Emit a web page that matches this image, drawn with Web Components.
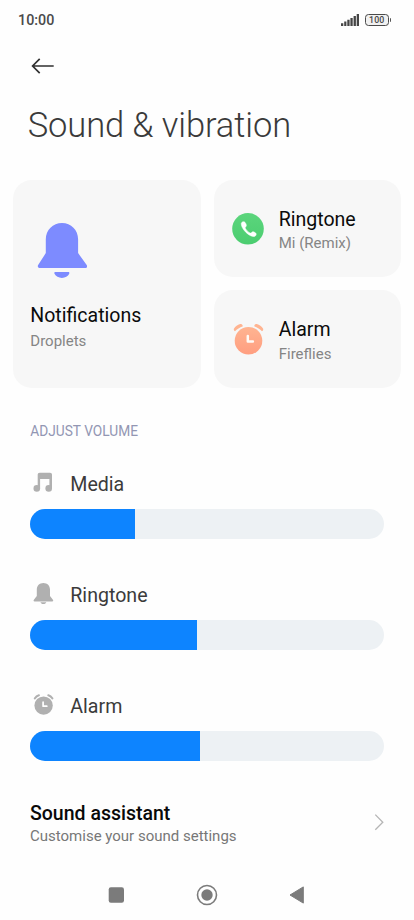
<!DOCTYPE html>
<html lang="en">
<head>
<meta charset="utf-8">
<title>Sound &amp; vibration</title>
<style>
html,body{margin:0;padding:0;background:#fefefe}
body{font-family:Roboto,"Liberation Sans",sans-serif;color:#333;width:414px;height:920px;overflow:hidden}
</style>
</head>
<body>
<sound-screen></sound-screen>
<script>
const define = (name, markup) => {
  customElements.define(name, class extends HTMLElement {
    constructor() {
      super();
      const t = document.createElement('template');
      t.innerHTML = typeof markup === 'function' ? markup(this) : markup;
      this.attachShadow({ mode: 'open' }).append(t.content.cloneNode(true));
    }
  });
};

const icons = {
  back: ['0 0 24 24', '<path d="M22.700 12H1.700M8.700 4.900L1.600 12L8.700 19.100" fill="none" stroke="#303030" stroke-width="1.700"/>'],
  bell: ['37 222 51 57', '<path fill="#7d8bff" d="M62 223c9.100 0 16.100 7.200 16.100 16.200v13.900l8.400 11.700c1.300 1.900.3 3.300-1.500 3.300H40c-1.900 0-2.900-1.400-1.700-3.300l7.500-11.700v-13.900C45.800 230.200 52.900 223 62 223zM55.500 272h12.600c1.200 0 1.500.8 1.100 1.800c-1.200 2.700-4 4.100-7.300 4.100s-6.100-1.400-7.400-4.100c-.4-1-.1-1.800 1-1.800z"/>'],
  phone: ['232 213 32 32', '<defs><linearGradient id="g" x1="0" y1="0" x2="0" y2="1"><stop offset="0" stop-color="#5bd57c"/><stop offset="1" stop-color="#4bcd70"/></linearGradient></defs><circle cx="248" cy="228.800" r="15.800" fill="url(#g)"/><path fill="#fff" stroke="#fff" stroke-width=".5" d="M241.300 223.500c.2-1.300 1.500-1.900 2.700-1.700c.9.1 1.500 1.100 2 2.300c.5 1.300.5 2-.2 2.600c-.8.7-.7 1.300-.1 2.200c1 1.600 2.400 3 4 3.900c.8.4 1.300.3 1.900-.4c.7-.8 1.400-.8 2.600-.3c1.200.6 2 1.300 2 2.100c0 1.200-.9 2.100-2.100 2.300c-1.900.3-5.300-1.400-8.100-4.100c-3-2.900-5-6.600-4.700-8.900z"/>'],
  alarm: ['232 323 33 33', '<defs><linearGradient id="a" x1="0" y1="0" x2="0" y2="1"><stop offset="0" stop-color="#ffb491"/><stop offset="1" stop-color="#ff9e80"/></linearGradient></defs><circle cx="248.500" cy="340.700" r="13.800" fill="url(#a)"/><path fill="#ffb491" d="M235 331.300c-1.200-.9-1.500-1.700-1-2.700c1.400-2.300 3.500-3.800 6.200-4.500c1-.2 1.800 0 2.200.9l.5 1.200c-3.300 1.200-5.900 2.900-7.900 5.100zM262 331.300c1.200-.9 1.500-1.700 1-2.700c-1.400-2.300-3.500-3.800-6.200-4.500c-1-.2-1.800 0-2.200.9l-.5 1.200c3.300 1.200 5.900 2.900 7.900 5.100z"/><path d="M247.800 336v5.600h5.100" fill="none" stroke="#fffaf5" stroke-width="2.500" stroke-linecap="round" stroke-linejoin="round"/>'],
  music: ['33 472 20 20', '<path fill="#b0b0b0" d="M37.700 474.700c0-1.300.7-2 2-2h10.300c1.300 0 2 .7 2 2V488.500H49.400V479H40.100V488.500H37.700z"/><circle cx="36.800" cy="488.400" r="3.300" fill="#b0b0b0"/><circle cx="48.700" cy="488.400" r="3.300" fill="#b0b0b0"/>'],
  bellSmall: ['33 583 21 21', '<path fill="#b0b0b0" d="M43.400 583.100c3.900 0 6.600 2.800 6.600 6.500v6.500l2.900 3.700c.7.900.3 1.700-.7 1.700H34.600c-1 0-1.400-.8-.7-1.700l2.900-3.700v-6.500c0-3.700 2.700-6.500 6.600-6.500zM40.500 602.200h5.800c-.3 1.100-1.400 1.800-2.900 1.800s-2.600-.7-2.900-1.800z"/>'],
  alarmSmall: ['33 694 21 21', '<circle cx="43.600" cy="705.600" r="9.200" fill="#b0b0b0"/><path d="M34.900 698.300q1.500-2.400 4-3.100M52.300 698.300q-1.500-2.400-4-3.100" fill="none" stroke="#b0b0b0" stroke-width="2.100" stroke-linecap="round"/><path d="M43.100 702.200v4h3.700" fill="none" stroke="#fff" stroke-width="1.700" stroke-linecap="round" stroke-linejoin="round"/>'],
  chevron: ['374 813 11 19', '<path d="M375.300 814.600l7.500 7.600l-7.500 7.600" fill="none" stroke="#b5b5b5" stroke-width="1.300"/>'],
  signal: ['340 13 20 14', '<path fill="#454545" d="M341 23.200h2.300V26H341zM344.200 21.500h2.200V26h-2.200zM347.300 19.800h2.300V26h-2.300zM350.400 17.900h2.300V26h-2.300zM353.600 16h2.300v10h-2.300zM356.700 14h2.300v12h-2.300z"/>'],
  square: ['0 0 22 22', '<rect x="3.700" y="3.300" width="15.300" height="15.400" rx="2.200" fill="#7b7b7b"/>'],
  home: ['0 0 22 22', '<circle cx="11" cy="11" r="9.500" fill="none" stroke="#7b7b7b" stroke-width="1.600"/><circle cx="11" cy="11" r="5.700" fill="#7b7b7b"/>'],
  triangle: ['0 0 22 22', '<path d="M4 11L17.300 2.900V19.100Z" fill="#7b7b7b" stroke="#7b7b7b" stroke-width="1" stroke-linejoin="round"/>']
};

define('ui-icon', el => {
  const [box, art] = icons[el.getAttribute('name')];
  const [, , w, h] = box.split(' ');
  return `<style>:host{display:block;flex:none;width:${w}px;height:${h}px}svg{display:block}</style><svg width="${w}" height="${h}" viewBox="${box}">${art}</svg>`;
});

define('battery-level', `<style>
:host{display:flex;align-items:center;gap:.5px}
.cell{box-sizing:border-box;width:24.500px;height:12px;border:1.300px solid #4a4a4a;border-radius:3.500px;display:flex;align-items:center;justify-content:center;font:500 8.800px/10px Roboto,sans-serif;letter-spacing:.1px;color:#484848;background:#f1f1f1}
.nub{width:1.700px;height:4px;background:#555;border-radius:0 1px 1px 0}
</style><div class="cell"><slot></slot></div><div class="nub"></div>`);

define('status-bar', `<style>
:host{display:flex;box-sizing:border-box;height:40px;padding:10px 22.800px 0 18px;justify-content:space-between}
.time{font-size:14.300px;line-height:20px;font-weight:500;color:#4a4a4a}
.right{display:flex;align-items:flex-start;gap:4.300px;padding-top:3px}
battery-level{margin-top:.6px}
</style><span class="time"><slot></slot></span><div class="right"><ui-icon name="signal"></ui-icon><battery-level>100</battery-level></div>`);

define('page-header', `<style>
:host{display:flex;flex-direction:column;height:139.500px}
ui-icon{margin:14px 0 0 30.500px}
h1{margin:25.300px 0 0 27.700px;font-weight:300;font-size:34.500px;letter-spacing:-.1px;line-height:44px;color:#3a3a3a;white-space:nowrap}
</style><ui-icon name="back"></ui-icon><h1><slot></slot></h1>`);

define('sound-card', `<style>
:host{display:flex;box-sizing:border-box;background:#f7f7f7;border-radius:19px;align-items:flex-start;padding:27.500px 0 0 18.500px;gap:14.400px}
:host([large]){flex-direction:column;padding:42.500px 0 0 17.300px;gap:25px}
b{display:block;font-weight:400;font-size:19.550px;line-height:24px;color:#0b0b0b}
:host(:not([large])) b{margin:.5px 0 -.5px}
span{display:block;font-size:15px;line-height:20px;color:#858585;margin-top:1.900px}
:host([large]) span{margin-top:3.500px}
:host([large]) b{margin-top:-.5px}
</style><slot name="icon"></slot><div><b><slot></slot></b><span><slot name="sub"></slot></span></div>`);

define('card-grid', `<style>
:host{display:grid;grid-template-columns:187.500px 187.500px;grid-template-rows:97.500px 97.500px;gap:13.300px;padding-left:13px}
::slotted([large]){grid-row:span 2}
</style><slot></slot>`);

define('section-label', `<style>
:host{display:block;margin:33.300px 0 0 30.300px;font-size:13.730px;line-height:20px;color:#9296b3}
</style><slot></slot>`);

define('volume-row', el => `<style>
:host{display:block;box-sizing:border-box;height:111.200px;padding:0 30px}
.head{display:flex;height:37px;gap:16.300px;padding-left:3px}
ui-icon{width:21px;margin-top:-.2px}
.head span{font-size:19.600px;line-height:24px;color:#3b3b3b;margin-top:.7px}
.track{height:30px;border-radius:15px;background:#edf1f4;overflow:hidden}
.fill{height:100%;width:${el.getAttribute('level')}px;background:#0d84ff}
</style><div class="head"><ui-icon name="${el.getAttribute('icon')}"></ui-icon><span><slot></slot></span></div><div class="track"><div class="fill"></div></div>`);

define('link-row', `<style>
:host{display:flex;justify-content:space-between;padding:0 29.500px 0 30px;height:55px}
b{display:block;font-weight:500;font-size:19.500px;line-height:24px;color:#090909}
span{display:block;font-size:15px;line-height:20px;color:#777;margin-top:.7px}
ui-icon{margin-top:11.500px}
</style><div><b><slot></slot></b><span><slot name="sub"></slot></span></div><ui-icon name="chevron"></ui-icon>`);

define('nav-bar', `<style>
:host{display:flex;height:22px;padding-left:105px;gap:68.500px}
</style><ui-icon name="square"></ui-icon><ui-icon name="home"></ui-icon><ui-icon name="triangle"></ui-icon>`);

define('sound-screen', `<style>
:host{display:block;width:414px}
.volumes{margin-top:30.800px}
link-row{margin-top:-3.700px}
nav-bar{margin-top:27.400px}
</style>
<status-bar>10:00</status-bar>
<page-header>Sound &amp; vibration</page-header>
<card-grid>
<sound-card large><ui-icon slot="icon" name="bell" style="margin-left:6.700px"></ui-icon>Notifications<span slot="sub">Droplets</span></sound-card>
<sound-card><ui-icon slot="icon" name="phone" style="margin-top:6px"></ui-icon>Ringtone<span slot="sub">Mi (Remix)</span></sound-card>
<sound-card><ui-icon slot="icon" name="alarm" style="margin:5.200px -1px 0 0"></ui-icon>Alarm<span slot="sub">Fireflies</span></sound-card>
</card-grid>
<section-label>ADJUST VOLUME</section-label>
<div class="volumes">
<volume-row icon="music" level="104.700">Media</volume-row>
<volume-row icon="bellSmall" level="166.700">Ringtone</volume-row>
<volume-row icon="alarmSmall" level="170.400">Alarm</volume-row>
</div>
<link-row>Sound assistant<span slot="sub">Customise your sound settings</span></link-row>
<nav-bar></nav-bar>
`);
</script>
</body>
</html>
